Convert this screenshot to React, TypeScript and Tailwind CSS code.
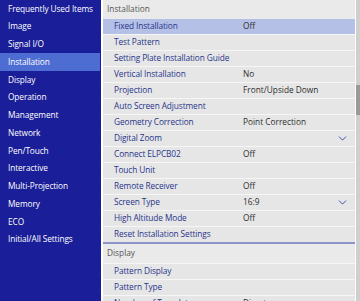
import React from 'react';
import { ChevronDown } from 'lucide-react';

const sideItems = [
  'Frequently Used Items',
  'Image',
  'Signal I/O',
  'Installation',
  'Display',
  'Operation',
  'Management',
  'Network',
  'Pen/Touch',
  'Interactive',
  'Multi-Projection',
  'Memory',
  'ECO',
  'Initial/All Settings',
];

type Row = { label: string; value?: string; chevron?: boolean; active?: boolean };

const installRows: Row[] = [
  { label: 'Fixed Installation', value: 'Off', active: true },
  { label: 'Test Pattern' },
  { label: 'Setting Plate Installation Guide' },
  { label: 'Vertical Installation', value: 'No' },
  { label: 'Projection', value: 'Front/Upside Down' },
  { label: 'Auto Screen Adjustment' },
  { label: 'Geometry Correction', value: 'Point Correction' },
  { label: 'Digital Zoom', chevron: true },
  { label: 'Connect ELPCB02', value: 'Off' },
  { label: 'Touch Unit' },
  { label: 'Remote Receiver', value: 'Off' },
  { label: 'Screen Type', value: '16:9', chevron: true },
  { label: 'High Altitude Mode', value: 'Off' },
  { label: 'Reset Installation Settings' },
];

const displayRows: Row[] = [
  { label: 'Pattern Display' },
  { label: 'Pattern Type' },
  { label: 'Number of Templates', value: 'Direct' },
];

const MenuRow = ({ row }: { row: Row }) => (
  <div
    className={`h-[16px] shrink-0 flex items-center border-b border-[#f6f6f6] ${row.active ? 'bg-[#b5c0e7]' : 'bg-[#e6e6e6]'}`}
  >
    <div className="w-[140px] shrink-0 pl-[11px] text-[#26348a] font-medium whitespace-nowrap tracking-[-0.1px]">{row.label}</div>
    <div className="flex-1 text-[#2e2e2e] font-medium whitespace-nowrap">{row.value}</div>
    {row.chevron && <ChevronDown size={13} strokeWidth={1.8} className="text-[#3d4ca8] mr-[6px]" />}
  </div>
);

export default function App() {
  return (
    <div
      className="w-[360px] h-[301px] overflow-hidden flex bg-white text-[8.3px] leading-none"
      style={{ fontFamily: '"Open Sans", "Liberation Sans", sans-serif' }}
    >
      {/* left menu */}
      <div className="w-[101px] shrink-0 bg-[#1a1e98] flex flex-col">
        {sideItems.map((s) => (
          <div
            key={s}
            className={`h-[17.75px] shrink-0 flex items-center pl-[8px] text-white font-medium whitespace-nowrap tracking-[-0.1px] ${s === 'Installation' ? 'bg-[#4e6dd3] w-[100px]' : ''}`}
          >
            {s}
          </div>
        ))}
      </div>

      {/* settings list */}
      <div className="w-[252px] ml-[2px] shrink-0 flex flex-col bg-[#e6e6e6]">
        <div className="h-[19px] shrink-0 flex items-center pl-[4px] text-[#555555] bg-[#eaeaea]">Installation</div>
        {installRows.map((r) => (
          <MenuRow key={r.label} row={r} />
        ))}
        <div className="h-[2px] shrink-0 bg-[#8f93c9] -mt-[1px]" />
        <div className="h-[20px] shrink-0 flex items-center pl-[4px] text-[#555555] bg-[#eaeaea] border-b border-[#f6f6f6]">Display</div>
        {displayRows.map((r) => (
          <MenuRow key={r.label} row={r} />
        ))}
      </div>

      {/* scrollbar */}
      <div className="w-[4px] ml-[1px] shrink-0 bg-[#cfcfcf] flex flex-col">
        <div className="h-[85px] shrink-0" />
        <div className="h-[30px] shrink-0 bg-[#9a9a9a]" />
      </div>
    </div>
  );
}
